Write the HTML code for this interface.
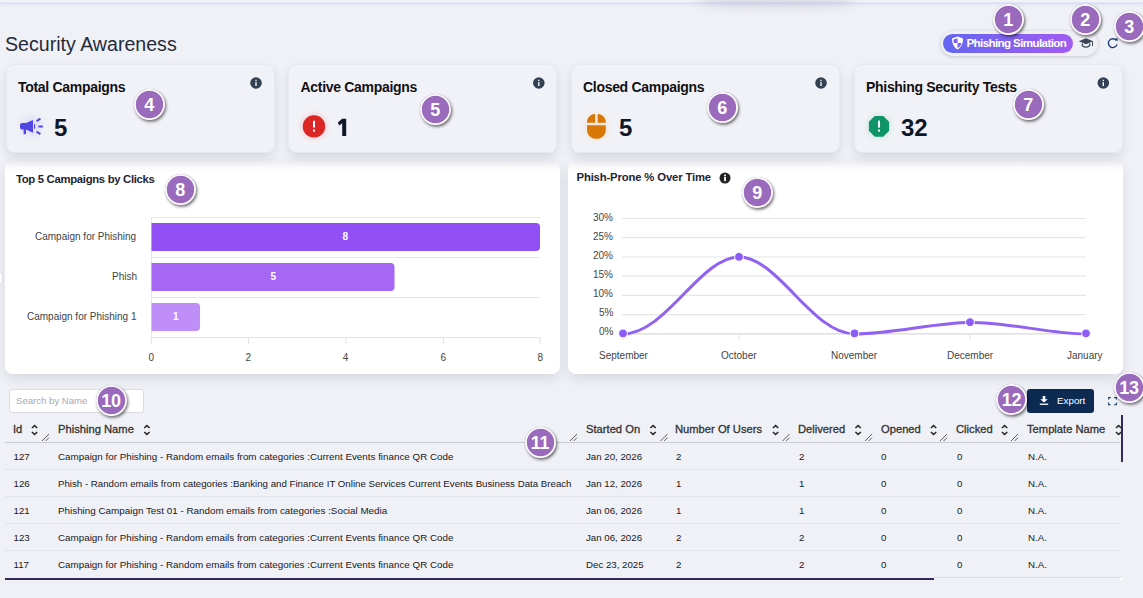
<!DOCTYPE html>
<html><head><meta charset="utf-8">
<style>
*{box-sizing:border-box;margin:0;padding:0}
html{background:#f0f1f6}
html,body{width:1143px;height:598px;overflow:hidden;font-family:"Liberation Sans",sans-serif;position:relative}
.abs{position:absolute}
.t{position:absolute;white-space:nowrap;line-height:1}
.topbar{left:0;top:0;width:1143px;height:3px;background:#f2f3f6;border-bottom:1px solid #dfe4fb;box-shadow:0 1px 3px rgba(120,130,220,.25)}
.title{left:5px;top:35px;font-size:19.6px;color:#262b3a}
.scard{position:absolute;top:64px;height:89px;background:#f1f2f7;border-radius:8px;border:1px solid #e8e9ef;box-shadow:0 5px 12px -2px rgba(30,30,60,.15)}
.slabel{position:absolute;left:11.5px;top:14.5px;font-size:14px;font-weight:bold;color:#111;letter-spacing:-0.3px;white-space:nowrap;line-height:1}
.snum{position:absolute;top:53px;font-size:24px;font-weight:bold;color:#0f172a;line-height:1}
.ccard{position:absolute;z-index:-1;top:161px;height:213px;background:linear-gradient(#eeeef2,#fbfbfc 7px,#fff 12px);border-radius:8px;box-shadow:0 5px 13px -2px rgba(30,30,60,.14)}
.ctitle{position:absolute;font-size:12px;font-weight:bold;color:#1f2433;white-space:nowrap;line-height:1}
.badge{position:absolute;width:31px;height:31px;border-radius:50%;background:#9a6abd;box-shadow:inset 0 0 0 1.8px #fff,1.2px 1.8px 3px rgba(0,0,0,.55);color:#fff;font-weight:bold;font-size:18px;text-align:center;line-height:33px;letter-spacing:-0.3px}
.ax{font-size:10px;color:#444;position:absolute;white-space:nowrap;line-height:1;margin-top:1.5px}
.th{position:absolute;top:423.5px;font-size:11.2px;font-weight:normal;-webkit-text-stroke:0.3px #333;color:#333;white-space:nowrap;line-height:1}
.td{position:absolute;font-size:9.7px;color:#181822;white-space:nowrap;line-height:1}
.rl{position:absolute;left:5px;width:1115px;height:1px;background:#e3e4ea}
</style></head><body>
<div class="abs topbar"></div>
<div class="abs" style="left:698px;top:-6px;width:155px;height:14px;border-radius:40%;background:rgba(140,140,165,.22);filter:blur(5px)"></div>

<div class="t title">Security Awareness</div>

<!-- top right pill -->
<div class="abs" style="left:941px;top:31px;width:157px;height:25px;border-radius:13px;background:#eff0f5;box-shadow:0 1px 4px rgba(0,0,0,.18)"></div>
<div class="abs" style="left:943px;top:34px;width:130px;height:19px;border-radius:10px;background:linear-gradient(90deg,#6366f1,#a15cf1)"></div>
<svg class="abs" style="left:951px;top:36px" width="13" height="14" viewBox="0 0 13 14">
<path d="M6.5 0.5 L12 2.5 C12 8 10 11.5 6.5 13.5 C3 11.5 1 8 1 2.5 Z" fill="#fff"/>
<path d="M6.5 2.2 L6.5 7 L10.5 7 C10.2 9.2 8.8 11 6.5 12.1 Z" fill="#7a62f2"/>
<path d="M6.5 2.2 L2.5 3.6 C2.5 5 2.6 6 2.8 7 L6.5 7 Z" fill="#7a62f2"/>
</svg>
<div class="t" style="left:966.5px;top:36.5px;font-size:11.6px;font-weight:bold;color:#fff;letter-spacing:-0.62px">Phishing Simulation</div>
<svg class="abs" style="left:0;top:0" width="1143" height="60" viewBox="0 0 1143 60">
<path d="M1086 38.2 L1093.2 41.2 L1086 44.2 L1078.8 41.2 Z" fill="#3a4556"/>
<path d="M1082.4 43.6 L1082.4 45.8 Q1086 48.6 1089.6 45.8 L1089.6 43.6" fill="none" stroke="#3a4556" stroke-width="1.3"/>
<path d="M1092.5 41.4 L1092.5 46" stroke="#3a4556" stroke-width="1"/>
<path d="M1116.2 40.4 A4.4 4.4 0 1 0 1117 44.4" fill="none" stroke="#1b3a78" stroke-width="1.35"/>
<path d="M1114.6 38.8 L1117.8 38.2 L1117.4 41.6 Z" fill="#1b3a78"/>
</svg>

<!-- stat cards -->
<div class="scard" style="left:5.5px;width:269.5px">
  <div class="slabel">Total Campaigns</div>
</div>
<div class="scard" style="left:288px;width:269px">
  <div class="slabel">Active Campaigns</div>
</div>
<div class="scard" style="left:570.5px;width:269.5px">
  <div class="slabel">Closed Campaigns</div>
</div>
<div class="scard" style="left:853.5px;width:269px">
  <div class="slabel">Phishing Security Tests</div>
</div>
<svg class="abs" style="left:0;top:0" width="1143" height="120" viewBox="0 0 1143 120">
<defs><g id="inf"><circle cx="0" cy="0" r="5.8" fill="#334155"/><rect x="-0.7" y="-3.2" width="1.4" height="1.3" fill="#f1f2f7"/><rect x="-0.7" y="-0.9" width="1.4" height="3.9" fill="#f1f2f7"/></g></defs>
<use href="#inf" x="256" y="83"/><use href="#inf" x="538.8" y="83"/><use href="#inf" x="821" y="83"/><use href="#inf" x="1103.3" y="83"/>
</svg>
<div class="t" style="left:54px;top:116px;font-size:24px;font-weight:bold;color:#0f172a">5</div>
<svg class="abs" style="left:330px;top:110px" width="25" height="30" viewBox="330 110 25 30"><path d="M342.2 118.8 L346.2 118.8 L346.2 135.9 L342.2 135.9 L342.2 123.2 L339.2 125.4 L337.8 122.6 Z" fill="#0f172a"/></svg>
<div class="t" style="left:619px;top:116px;font-size:24px;font-weight:bold;color:#0f172a">5</div>
<div class="t" style="left:901px;top:116px;font-size:24px;font-weight:bold;color:#0f172a">32</div>

<!-- megaphone -->
<svg class="abs" style="left:14px;top:111px" width="36" height="30" viewBox="14 111 36 30">
<defs><filter id="gl" x="-50%" y="-50%" width="200%" height="200%"><feGaussianBlur stdDeviation="3"/></filter></defs>
<circle cx="31" cy="126" r="11" fill="#c7c4f5" opacity=".35" filter="url(#gl)"/>
<path d="M22 123 L26 123 L33 120 L33 132.8 L26 129.6 L22 129.6 Q20 129.6 20 127.6 L20 125 Q20 123 22 123 Z" fill="#4f46e5"/>
<rect x="23.6" y="128" width="2.4" height="6.2" fill="#4f46e5"/>
<path d="M34 123.3 Q36.6 126.4 34 129.5 Z" fill="#4f46e5"/>
<path d="M36.6 121.2 L40.4 118.6 M38.4 126.5 L42.8 126.5 M36.6 131.6 L40.4 134.2" stroke="#4f46e5" stroke-width="2" stroke-linecap="butt"/>
</svg>
<!-- red alert circle -->
<svg class="abs" style="left:296px;top:108px" width="36" height="36" viewBox="296 108 36 36">
<defs><filter id="gl2" x="-50%" y="-50%" width="200%" height="200%"><feGaussianBlur stdDeviation="2.5"/></filter></defs>
<circle cx="314" cy="126.4" r="13" fill="#f3b6b6" opacity=".5" filter="url(#gl2)"/>
<circle cx="314" cy="126.4" r="11.2" fill="#dc2626"/>
<rect x="313" y="120.8" width="2" height="6.7" fill="#fff"/>
<rect x="313" y="129.6" width="2" height="2" fill="#fff"/>
</svg>
<!-- mouse -->
<svg class="abs" style="left:578px;top:108px" width="36" height="36" viewBox="578 108 36 36">
<defs><filter id="gl3" x="-50%" y="-50%" width="200%" height="200%"><feGaussianBlur stdDeviation="3"/></filter></defs>
<ellipse cx="596.4" cy="126.4" rx="12" ry="13" fill="#f1d7bd" opacity=".45" filter="url(#gl3)"/>
<path d="M587 122.7 C587 117.8 590.4 114.5 595.1 114.1 L595.1 122.7 Z" fill="#d97706"/>
<path d="M605.8 122.7 C605.8 117.8 602.4 114.5 597.7 114.1 L597.7 122.7 Z" fill="#d97706"/>
<path d="M587 125.2 L605.8 125.2 L605.8 129.5 C605.8 135.2 601.8 138.8 596.4 138.8 C591 138.8 587 135.2 587 129.5 Z" fill="#d97706"/>
</svg>
<!-- green octagon -->
<svg class="abs" style="left:861px;top:108px" width="36" height="36" viewBox="861 108 36 36">
<defs><filter id="gl4" x="-50%" y="-50%" width="200%" height="200%"><feGaussianBlur stdDeviation="2.5"/></filter></defs>
<circle cx="879" cy="126.3" r="12" fill="#b5dccb" opacity=".5" filter="url(#gl4)"/>
<path d="M874.8 115.9 L883.2 115.9 L889.1 121.8 L889.1 130.8 L883.2 136.7 L874.8 136.7 L868.9 130.8 L868.9 121.8 Z" fill="#0e9467"/>
<rect x="878" y="120.6" width="2" height="7" fill="#fff"/>
<rect x="878" y="129.6" width="2" height="2" fill="#fff"/>
</svg>

<!-- chart cards -->
<div class="ccard" style="left:5px;width:555px"></div>
<div class="ccard" style="left:568px;width:555px"></div>
<div class="ctitle" style="left:16px;top:174.4px;font-size:11.3px;letter-spacing:-0.3px">Top 5 Campaigns by Clicks</div>
<div class="ctitle" style="left:576.5px;top:172px;font-size:11.3px;letter-spacing:-0.15px">Phish-Prone % Over Time</div>
<svg class="abs" style="left:719px;top:172px" width="12" height="12" viewBox="0 0 12 12">
<circle cx="6" cy="6" r="5.5" fill="#222"/><rect x="5.1" y="5" width="1.8" height="4.2" fill="#fff"/><rect x="5.1" y="2.6" width="1.8" height="1.7" fill="#fff"/>
</svg>

<!-- bar chart -->
<svg class="abs" style="left:0;top:0" width="1143" height="598" viewBox="0 0 1143 598">
<g stroke="#e6e6e6" stroke-width="1.2">
<line x1="151" y1="217.5" x2="540" y2="217.5"/>
<line x1="151" y1="257.5" x2="540" y2="257.5"/>
<line x1="151" y1="297.5" x2="540" y2="297.5"/>
<line x1="151" y1="337.5" x2="540" y2="337.5"/>
<line x1="151.5" y1="217" x2="151.5" y2="344"/>
<line x1="248.5" y1="337" x2="248.5" y2="344"/>
<line x1="346" y1="337" x2="346" y2="344"/>
<line x1="443.5" y1="337" x2="443.5" y2="344"/>
<line x1="540" y1="337" x2="540" y2="344"/>
</g>
<path d="M151.5 223 H536 Q540 223 540 227 V247 Q540 251 536 251 H151.5 Z" fill="#914ff5"/>
<path d="M151.5 263 H390.5 Q394.5 263 394.5 267 V287 Q394.5 291 390.5 291 H151.5 Z" fill="#a667f5"/>
<path d="M151.5 303 H196 Q200 303 200 307 V327 Q200 331 196 331 H151.5 Z" fill="#bf8ef8"/>
</svg>
<div class="ax" style="margin-top:0.8px;left:35px;top:231px">Campaign for Phishing</div>
<div class="ax" style="margin-top:0.8px;left:112px;top:271px">Phish</div>
<div class="ax" style="margin-top:0.8px;left:27px;top:311px">Campaign for Phishing 1</div>
<div class="ax" style="margin-top:0;left:342.5px;top:231.5px;font-weight:bold;color:#fff">8</div>
<div class="ax" style="margin-top:0;left:270.5px;top:271.5px;font-weight:bold;color:#fff">5</div>
<div class="ax" style="margin-top:0;left:173px;top:311.5px;font-weight:bold;color:#fff">1</div>
<div class="ax" style="left:148.5px;top:351.5px">0</div>
<div class="ax" style="left:245.5px;top:351.5px">2</div>
<div class="ax" style="left:342.8px;top:351.5px">4</div>
<div class="ax" style="left:440.5px;top:351.5px">6</div>
<div class="ax" style="left:537.5px;top:351.5px">8</div>

<!-- line chart -->
<svg class="abs" style="left:0;top:0" width="1143" height="598" viewBox="0 0 1143 598">
<g stroke="#e6e6e6" stroke-width="1.2">
<line x1="622" y1="218.5" x2="1086" y2="218.5"/>
<line x1="622" y1="237.7" x2="1086" y2="237.7"/>
<line x1="622" y1="257" x2="1086" y2="257"/>
<line x1="622" y1="276.2" x2="1086" y2="276.2"/>
<line x1="622" y1="295.4" x2="1086" y2="295.4"/>
<line x1="622" y1="314.6" x2="1086" y2="314.6"/>
<line x1="622" y1="333.9" x2="1086" y2="333.9" stroke="#d9d9d9" stroke-width="1.4"/>
<line x1="623" y1="334" x2="623" y2="340"/>
<line x1="739" y1="334" x2="739" y2="340"/>
<line x1="854.5" y1="334" x2="854.5" y2="340"/>
<line x1="970" y1="334" x2="970" y2="340"/>
<line x1="1086" y1="334" x2="1086" y2="340"/>
</g>
<path d="M623 333.9 C666 333.9 700 257 739 257 C778 257 812 333.9 854.5 333.9 C893 333.9 935 322.4 970 322.4 C1010 322.4 1050 333.9 1086 333.9" fill="none" stroke="#9162f2" stroke-width="3"/>
<g fill="#8b5cf6" stroke="#fff" stroke-width="1">
<circle cx="623" cy="333.4" r="4.4"/><circle cx="739" cy="256.8" r="4.4"/><circle cx="854.5" cy="333.4" r="4.4"/><circle cx="970" cy="322.2" r="4.4"/><circle cx="1086" cy="333.4" r="4.4"/>
</g>
</svg>
<div class="ax" style="margin-top:0;left:593px;top:213px">30%</div>
<div class="ax" style="margin-top:0;left:593px;top:232px">25%</div>
<div class="ax" style="margin-top:0;left:593px;top:251px">20%</div>
<div class="ax" style="margin-top:0;left:593px;top:270px">15%</div>
<div class="ax" style="margin-top:0;left:593px;top:289px">10%</div>
<div class="ax" style="margin-top:0;left:599px;top:308px">5%</div>
<div class="ax" style="margin-top:0;left:599px;top:327px">0%</div>
<div class="ax" style="margin-top:1px;left:599px;top:350px">September</div>
<div class="ax" style="margin-top:1px;left:721px;top:350px">October</div>
<div class="ax" style="margin-top:1px;left:831px;top:350px">November</div>
<div class="ax" style="margin-top:1px;left:947px;top:350px">December</div>
<div class="ax" style="margin-top:1px;left:1067px;top:350px">January</div>

<!-- table controls -->
<div class="abs" style="left:9px;top:389px;width:135px;height:24px;background:#fff;border:1px solid #d9dbe0;border-radius:3px"></div>
<div class="t" style="left:16px;top:396px;font-size:9.6px;color:#a3a9b6">Search by Name</div>
<div class="abs" style="left:1027px;top:389px;width:67px;height:24px;background:#0c2a52;border-radius:3px"></div>
<svg class="abs" style="left:1039px;top:396px" width="10" height="9" viewBox="0 0 10 9">
<path d="M3.7 0 H6.3 V3.2 H8.8 L5 6.6 L1.2 3.2 H3.7 Z" fill="#fff"/><rect x="0.8" y="7.6" width="8.4" height="1.3" fill="#fff"/>
</svg>
<div class="t" style="left:1057px;top:396px;font-size:9.8px;color:#fff">Export</div>
<svg class="abs" style="left:1108px;top:396.5px" width="10" height="9" viewBox="0 0 10 9"><path d="M0.6 2.6 V0.6 H2.8 M6.2 0.6 H8.4 V2.6 M8.4 5.6 V7.8 H6.2 M2.8 7.8 H0.6 V5.6" fill="none" stroke="#1e3a6a" stroke-width="1.1"/></svg>

<!-- table header -->
<div class="th" style="left:13px">Id</div>
<div class="th" style="left:58px">Phishing Name</div>
<div class="th" style="left:586px">Started On</div>
<div class="th" style="left:675px">Number Of Users</div>
<div class="th" style="left:798px">Delivered</div>
<div class="th" style="left:881px">Opened</div>
<div class="th" style="left:956px">Clicked</div>
<div class="th" style="left:1027px">Template Name</div>
<svg class="abs" style="left:0;top:0" width="1143" height="598" viewBox="0 0 1143 598">
<defs>
<g id="sort"><path d="M0.4 3 L3.1 0.6 L5.8 3 M0.4 7 L3.1 9.4 L5.8 7" fill="none" stroke="#2a2a2a" stroke-width="1.5"/></g>
<g id="rh"><path d="M0 7 L7 0 M3.6 7 L7 3.6" stroke="#3a3a3a" stroke-width="0.8"/></g>
</defs>
<use href="#sort" x="31.5" y="425"/>
<use href="#sort" x="143.8" y="425"/>
<use href="#sort" x="650" y="425"/>
<use href="#sort" x="772.5" y="425"/>
<use href="#sort" x="855" y="425"/>
<use href="#sort" x="930.5" y="425"/>
<use href="#sort" x="1001.5" y="425"/>
<use href="#sort" x="1115.5" y="425"/>
<use href="#rh" x="42" y="434"/>
<use href="#rh" x="570" y="434"/>
<use href="#rh" x="660.5" y="434"/>
<use href="#rh" x="782.5" y="434"/>
<use href="#rh" x="865" y="434"/>
<use href="#rh" x="940" y="434"/>
<use href="#rh" x="1011" y="434"/>
</svg>
<div class="abs" style="left:1122px;top:410px;width:21px;height:30px;background:#f0f1f6"></div>
<div class="abs" style="left:5px;top:442px;width:1115px;height:1.2px;background:#c9cad2"></div>
<div class="rl" style="top:469px"></div>
<div class="rl" style="top:496px"></div>
<div class="rl" style="top:523px"></div>
<div class="rl" style="top:550px"></div>
<div class="abs" style="left:934px;top:577px;width:187px;height:1px;background:#dcdde3"></div><div class="abs" style="left:1120px;top:578px;width:2px;height:2px;background:#fff"></div>
<div class="abs" style="left:5px;top:578px;width:929px;height:2.2px;background:#35285a"></div>
<div class="abs" style="left:1121px;top:415px;width:2.2px;height:47px;background:#35285a"></div>

<!-- rows -->
<div class="td" style="left:13.5px;top:452px">127</div>
<div class="td" style="left:58px;top:452px;font-size:9.82px">Campaign for Phishing - Random emails from categories :Current Events finance QR Code</div>
<div class="td" style="left:586px;top:452px">Jan 20, 2026</div>
<div class="td" style="left:676px;top:452px">2</div>
<div class="td" style="left:799px;top:452px">2</div>
<div class="td" style="left:881px;top:452px">0</div>
<div class="td" style="left:957px;top:452px">0</div>
<div class="td" style="left:1028px;top:452px">N.A.</div>

<div class="td" style="left:13.5px;top:479px">126</div>
<div class="td" style="left:58px;top:479px">Phish - Random emails from categories :Banking and Finance IT Online Services Current Events Business Data Breach</div>
<div class="td" style="left:586px;top:479px">Jan 12, 2026</div>
<div class="td" style="left:676px;top:479px">1</div>
<div class="td" style="left:799px;top:479px">1</div>
<div class="td" style="left:881px;top:479px">0</div>
<div class="td" style="left:957px;top:479px">0</div>
<div class="td" style="left:1028px;top:479px">N.A.</div>

<div class="td" style="left:13.5px;top:506px">121</div>
<div class="td" style="left:58px;top:506px;font-size:9.85px">Phishing Campaign Test 01 - Random emails from categories :Social Media</div>
<div class="td" style="left:586px;top:506px">Jan 06, 2026</div>
<div class="td" style="left:676px;top:506px">1</div>
<div class="td" style="left:799px;top:506px">1</div>
<div class="td" style="left:881px;top:506px">0</div>
<div class="td" style="left:957px;top:506px">0</div>
<div class="td" style="left:1028px;top:506px">N.A.</div>

<div class="td" style="left:13.5px;top:533px">123</div>
<div class="td" style="left:58px;top:533px;font-size:9.82px">Campaign for Phishing - Random emails from categories :Current Events finance QR Code</div>
<div class="td" style="left:586px;top:533px">Jan 06, 2026</div>
<div class="td" style="left:676px;top:533px">2</div>
<div class="td" style="left:799px;top:533px">2</div>
<div class="td" style="left:881px;top:533px">0</div>
<div class="td" style="left:957px;top:533px">0</div>
<div class="td" style="left:1028px;top:533px">N.A.</div>

<div class="td" style="left:13.5px;top:560px">117</div>
<div class="td" style="left:58px;top:560px;font-size:9.82px">Campaign for Phishing - Random emails from categories :Current Events finance QR Code</div>
<div class="td" style="left:586px;top:560px">Dec 23, 2025</div>
<div class="td" style="left:676px;top:560px">2</div>
<div class="td" style="left:799px;top:560px">2</div>
<div class="td" style="left:881px;top:560px">0</div>
<div class="td" style="left:957px;top:560px">0</div>
<div class="td" style="left:1028px;top:560px">N.A.</div>

<!-- left edge artifact -->
<div class="abs" style="left:-7px;top:271px;width:9px;height:14px;border-radius:50%;background:#fff;box-shadow:0 0 2px rgba(0,0,0,.15)"></div>

<!-- badges -->
<div class="badge" style="left:992.5px;top:3.5px">1</div>
<div class="badge" style="left:1069.5px;top:3.5px">2</div>
<div class="badge" style="left:1113.5px;top:10.5px">3</div>
<div class="badge" style="left:133.5px;top:88.5px">4</div>
<div class="badge" style="left:419.5px;top:93.5px">5</div>
<div class="badge" style="left:706.5px;top:91.5px">6</div>
<div class="badge" style="left:1012.5px;top:88.5px">7</div>
<div class="badge" style="left:164.5px;top:173.5px">8</div>
<div class="badge" style="left:741.5px;top:176.5px">9</div>
<div class="badge" style="left:95.5px;top:384.5px">10</div>
<div class="badge" style="left:524.5px;top:426.5px">11</div>
<div class="badge" style="left:996px;top:383.5px">12</div>
<div class="badge" style="left:1113.5px;top:372px">13</div>
</body></html>
